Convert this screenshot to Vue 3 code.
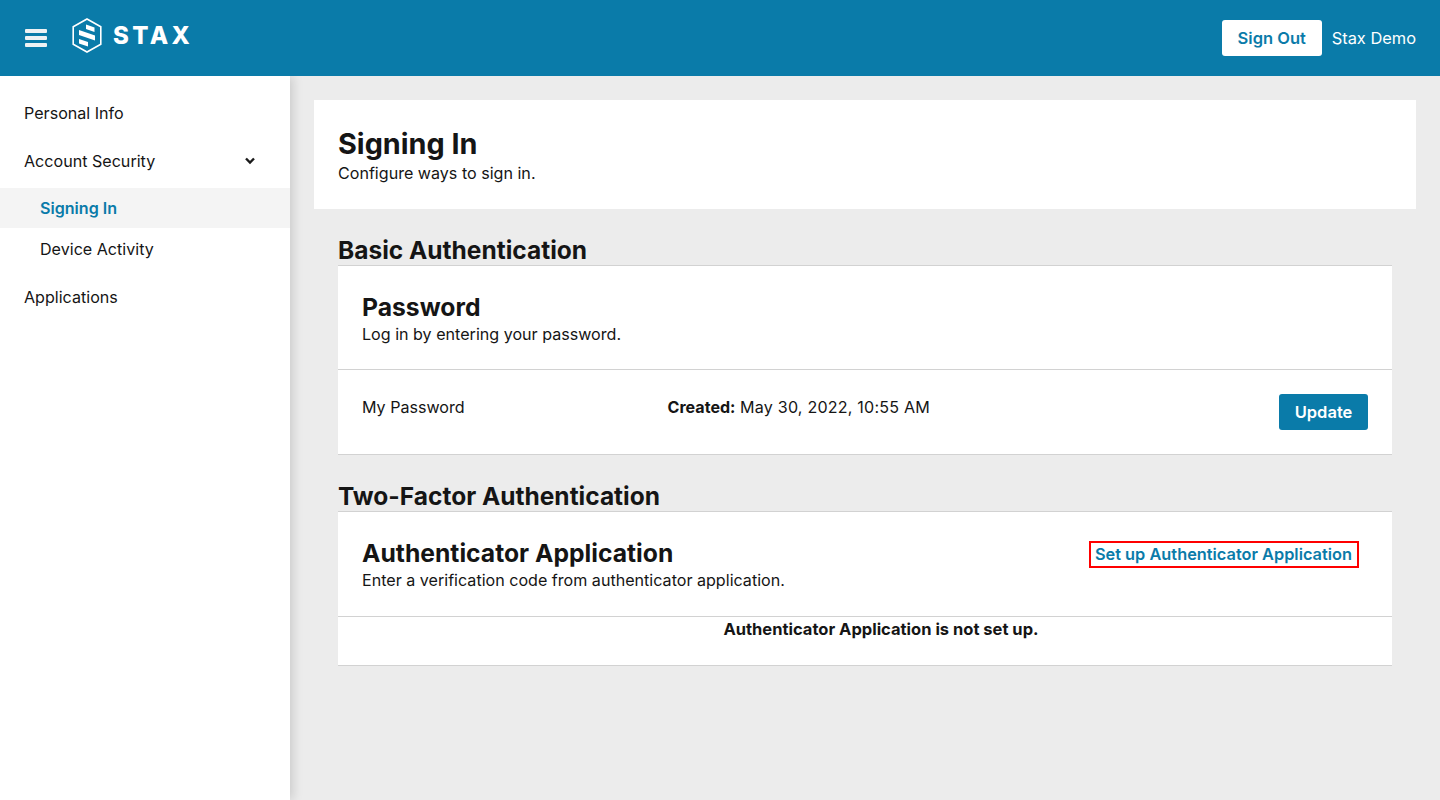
<script setup>
const navItems = [
  { label: 'Personal Info' },
  {
    label: 'Account Security',
    open: true,
    children: [
      { label: 'Signing In', active: true },
      { label: 'Device Activity' }
    ]
  },
  { label: 'Applications' }
]
</script>

<template>
  <div class="page">
    <header class="topbar">
      <div class="brand">
        <svg class="burger" width="22" height="18" viewBox="0 0 22 18">
          <rect x="0" y="0" width="22" height="4" rx="1" fill="#eef2f4" />
          <rect x="0" y="7" width="22" height="4" rx="1" fill="#eef2f4" />
          <rect x="0" y="14" width="22" height="4" rx="1" fill="#eef2f4" />
        </svg>
        <svg class="mark" width="30" height="35" viewBox="0 0 30 35">
          <path d="M15 1 L28.8 8.8 V26.2 L15 34 L1.2 26.2 V8.8 Z" fill="none" stroke="#fff" stroke-width="1.6" />
          <path d="M14 6.5 L22.5 9.5 V14 L14 11 Z" fill="#fff" />
          <path d="M7 12 L23 17.5 V22.5 L7 17 Z" fill="#fff" />
          <path d="M7 21 L16 24 V28.5 L7 25.5 Z" fill="#fff" />
        </svg>
        <span class="wordmark">STAX</span>
      </div>
      <div class="account">
        <button class="sign-out">Sign Out</button>
        <span class="user">Stax Demo</span>
      </div>
    </header>

    <div class="body">
      <nav class="sidebar">
        <template v-for="item in navItems" :key="item.label">
          <div class="nav-item">
            <span>{{ item.label }}</span>
            <svg v-if="item.open" class="chevron" width="12" height="8" viewBox="0 0 12 8">
              <path d="M2 1.5 L6 5.5 L10 1.5" fill="none" stroke="#1a1a1a" stroke-width="2.4" />
            </svg>
          </div>
          <div v-if="item.children" class="nav-children">
            <div
              v-for="child in item.children"
              :key="child.label"
              :class="['nav-child', { 'is-active': child.active }]"
            >
              {{ child.label }}
            </div>
          </div>
        </template>
      </nav>

      <main class="content">
        <section class="page-head">
          <h1>Signing In</h1>
          <p>Configure ways to sign in.</p>
        </section>

        <section class="group">
          <h2>Basic Authentication</h2>
          <div class="card">
            <div class="card-head">
              <div>
                <h3>Password</h3>
                <p>Log in by entering your password.</p>
              </div>
            </div>
            <div class="password-row">
              <span class="password-name">My Password</span>
              <span class="password-created"><b>Created:</b> <span class="date">May 30, 2022, 10:55 AM</span></span>
              <button class="update">Update</button>
            </div>
          </div>
        </section>

        <section class="group">
          <h2>Two-Factor Authentication</h2>
          <div class="card">
            <div class="card-head has-link">
              <div>
                <h3>Authenticator Application</h3>
                <p>Enter a verification code from authenticator application.</p>
              </div>
              <a class="setup-link">Set up Authenticator Application</a>
            </div>
            <div class="empty-row">Authenticator Application is not set up.</div>
          </div>
        </section>
      </main>
    </div>
  </div>
</template>

<style>
body {
  background: #ececec;
}
</style>

<style scoped>
.page {
  min-height: 800px;
  display: flex;
  flex-direction: column;
  font-family: Inter, "Liberation Sans", sans-serif;
  font-size: 16.1px;
  color: #151515;
}

.topbar {
  height: 76px;
  background: #0a7ba9;
  display: flex;
  align-items: center;
  justify-content: space-between;
  padding: 0 24px;
  position: relative;
  z-index: 2;
}

.brand {
  display: flex;
  align-items: center;
  margin-top: -6px;
}

.burger {
  margin: 6px 25px 0 1px;
}

.mark {
  margin-right: 11px;
}

.wordmark {
  color: #fff;
  font-weight: 800;
  font-size: 24px;
  letter-spacing: 3.4px;
}

.account {
  display: flex;
  align-items: center;
  gap: 10px;
}

.sign-out {
  height: 36px;
  width: 100px;
  border: none;
  border-radius: 3px;
  background: #fff;
  color: #0a7ba9;
  font: 600 16.5px Inter, sans-serif;
}

.user {
  color: #fff;
  font-size: 16.4px;
}

.body {
  flex: 1;
  display: flex;
}

.sidebar {
  width: 290px;
  height: 724px;
  padding-top: 13px;
  box-sizing: border-box;
  background: #fff;
  box-shadow: 3px 0 10px rgba(0, 0, 0, 0.14);
}

.nav-item {
  height: 48px;
  display: flex;
  align-items: center;
  justify-content: space-between;
  padding: 0 34px 0 24px;
}

.nav-children {
  margin: 3px 0;
}

.nav-child {
  height: 40px;
  display: flex;
  align-items: center;
  padding-left: 40px;
}

.nav-child + .nav-child {
  height: 42px;
}

.nav-child.is-active {
  background: #f4f4f4;
  color: #0a7ba9;
  font-weight: 600;
}

.content {
  flex: 1;
  padding: 24px;
}

.page-head {
  background: #fff;
  padding: 28px 24px;
  height: 109px;
  box-sizing: border-box;
}

h1 {
  margin: 0 0 3px;
  font-size: 28.8px;
  line-height: 32px;
  font-weight: 700;
}

p {
  margin: 0;
  line-height: 20px;
}

.group {
  margin: 0 24px;
}

h2 {
  margin: 27px 0 0;
  font-size: 24.5px;
  line-height: 29px;
  font-weight: 700;
}

h3 {
  margin: 0 0 3px;
  font-size: 24.7px;
  line-height: 28px;
  font-weight: 700;
}

.card {
  background: #fff;
  border-top: 1px solid #d2d2d2;
  border-bottom: 1px solid #d2d2d2;
}

.card-head {
  height: 104px;
  padding: 27px 24px 0;
  box-sizing: border-box;
  display: flex;
  justify-content: space-between;
  border-bottom: 1px solid #d2d2d2;
}

.card-head.has-link {
  height: 105px;
}

.password-row {
  height: 84px;
  padding: 24px;
  box-sizing: border-box;
  display: flex;
  align-items: flex-start;
}

.password-name {
  width: 305.5px;
  line-height: 26px;
}

.password-created {
  flex: 1;
  line-height: 26px;
}

.date {
  letter-spacing: 0.2px;
}

.update {
  width: 89px;
  height: 36px;
  border: none;
  border-radius: 3px;
  background: #0a7ba9;
  color: #fff;
  font: 600 16.5px Inter, sans-serif;
}

.setup-link {
  align-self: flex-start;
  margin: 4px 11px 0 0;
  padding: 0 5px 0 4px;
  line-height: 23px;
  color: #0a7ba9;
  font-size: 16.35px;
  font-weight: 600;
  outline: 2px solid #f00;
}

.empty-row {
  height: 48px;
  padding: 2px 0 0 32px;
  box-sizing: border-box;
  text-align: center;
  font-size: 16.5px;
  font-weight: 700;
  line-height: 20px;
}
</style>
